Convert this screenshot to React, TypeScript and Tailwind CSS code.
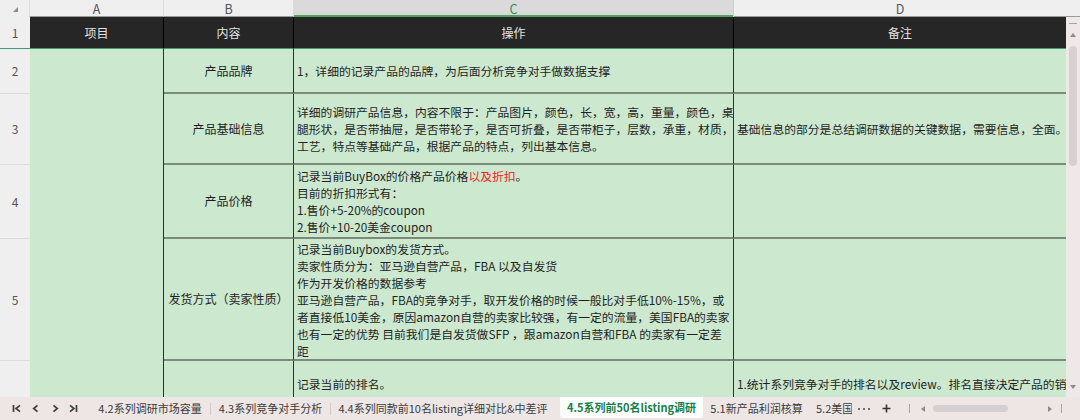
import React from "react";

const Line = ({ children }: { children: React.ReactNode }) => (
  <div className="whitespace-nowrap leading-[17px]">{children}</div>
);

const RowHead = ({ n, last }: { n?: string; last?: boolean }) => (
  <div
    className={
      "flex items-center justify-center bg-[#efefef] text-[12px] text-[#555] " +
      (last ? "" : "border-b border-[#dcdcdc]")
    }
  >
    {n}
  </div>
);

const BCell = ({ children, last }: { children?: React.ReactNode; last?: boolean }) => (
  <div
    className={
      "flex items-center justify-center bg-[#cce8cf] border-r border-[#2f2f2f] text-[12px] whitespace-nowrap " +
      (last ? "" : "border-b-2 border-b-[#7a8a7b]")
    }
  >
    {children}
  </div>
);

const CCell = ({ children, last, top }: { children?: React.ReactNode; last?: boolean; top?: boolean }) => (
  <div
    className={
      "flex flex-col overflow-hidden bg-[#cce8cf] border-r border-[#2f2f2f] pl-[3px] text-[11.8px] " +
      (top ? "justify-start pt-[14px] " : "justify-center ") +
      (last ? "" : "border-b-2 border-b-[#7a8a7b]")
    }
  >
    {children}
  </div>
);

const DCell = ({ children, last, top }: { children?: React.ReactNode; last?: boolean; top?: boolean }) => (
  <div
    className={
      "flex flex-col overflow-hidden bg-[#cce8cf] pl-[3px] text-[11.8px] " +
      (top ? "justify-start pt-[14px] " : "justify-center ") +
      (last ? "" : "border-b-2 border-b-[#7a8a7b]")
    }
  >
    {children}
  </div>
);

export default function App() {
  return (
    <div className="w-[1080px] h-[420px] overflow-hidden bg-white flex flex-col font-['Noto_Sans_CJK_SC','Noto_Sans',sans-serif] text-[#1f1f1f]">
      {/* column header */}
      <div className="flex h-[17px] bg-[#efefef] text-[12.5px] text-[#555]">
        <div className="w-[30px] border-r border-[#dcdcdc] flex items-start pl-[13px] pt-[7px]">
          <svg width="5" height="5" viewBox="0 0 5 5">
            <path d="M5 0 L5 5 L0 5 Z" fill="#8a8a8a" />
          </svg>
        </div>
        <div className="w-[134px] border-r border-[#dcdcdc] border-b border-b-[#9a9a9a] flex items-center justify-center">
          <span className="leading-[15px]">A</span>
        </div>
        <div className="w-[130px] border-r border-[#dcdcdc] border-b border-b-[#9a9a9a] flex items-center justify-center">
          <span className="leading-[15px]">B</span>
        </div>
        <div className="w-[440px] bg-[#dadada] border-r border-[#cfcfcf] shadow-[inset_0_-2px_0_#4fa35b] flex items-center justify-center text-[#1f8f55]">
          <span className="leading-[15px]">C</span>
        </div>
        <div className="w-[332px] border-b border-b-[#9a9a9a] flex items-center justify-center">
          <span className="leading-[15px]">D</span>
        </div>
        <div className="flex-1 border-b border-b-[#9a9a9a]" />
      </div>

      {/* sheet body */}
      <div className="flex h-[380px]">
        <div className="grid w-[1066px] h-[380px] overflow-hidden grid-cols-[30px_134px_130px_440px_332px] grid-rows-[32px_45px_71px_74px_122px_1fr]">
          {/* row 1 */}
          <div className="flex items-center justify-center bg-[#efefef] text-[12px] text-[#555] border-b border-[#3f9a78]">1</div>
          <div className="flex items-center justify-center bg-[#262626] text-[#e4e4e4] text-[12px] border-r border-black border-b border-b-[#3f9a78]">项目</div>
          <div className="flex items-center justify-center bg-[#262626] text-[#e4e4e4] text-[12px] border-r border-black border-b border-b-[#3f9a78]">内容</div>
          <div className="flex items-center justify-center bg-[#262626] text-[#e4e4e4] text-[12px] border-r border-black border-b border-b-[#3f9a78]">操作</div>
          <div className="flex items-center justify-center bg-[#262626] text-[#e4e4e4] text-[12px] border-b border-b-[#3f9a78]">备注</div>

          {/* column A merged */}
          <div className="col-start-2 row-start-2 row-span-5 bg-[#cce8cf] border-r border-[#2f2f2f]" />

          {/* row 2 */}
          <div className="col-start-1 row-start-2 grid">
            <RowHead n="2" />
          </div>
          <div className="col-start-3 row-start-2 grid">
            <BCell>产品品牌</BCell>
          </div>
          <div className="col-start-4 row-start-2 grid">
            <CCell>
              <Line>1，详细的记录产品的品牌，为后面分析竞争对手做数据支撑</Line>
            </CCell>
          </div>
          <div className="col-start-5 row-start-2 grid">
            <DCell />
          </div>

          {/* row 3 */}
          <div className="col-start-1 row-start-3 grid">
            <RowHead n="3" />
          </div>
          <div className="col-start-3 row-start-3 grid">
            <BCell>产品基础信息</BCell>
          </div>
          <div className="col-start-4 row-start-3 grid">
            <CCell>
              <Line>详细的调研产品信息，内容不限于：产品图片，颜色，长，宽，高，重量，颜色，桌</Line>
              <Line>腿形状，是否带抽屉，是否带轮子，是否可折叠，是否带柜子，层数，承重，材质，</Line>
              <Line>工艺，特点等基础产品，根据产品的特点，列出基本信息。</Line>
            </CCell>
          </div>
          <div className="col-start-5 row-start-3 grid">
            <DCell>
              <Line>基础信息的部分是总结调研数据的关键数据，需要信息，全面。</Line>
            </DCell>
          </div>

          {/* row 4 */}
          <div className="col-start-1 row-start-4 grid">
            <RowHead n="4" />
          </div>
          <div className="col-start-3 row-start-4 grid">
            <BCell>产品价格</BCell>
          </div>
          <div className="col-start-4 row-start-4 grid">
            <CCell>
              <Line>
                记录当前BuyBox的价格产品价格<span className="text-[#f02020]">以及折扣</span>。
              </Line>
              <Line>目前的折扣形式有：</Line>
              <Line>1.售价+5-20%的coupon</Line>
              <Line>2.售价+10-20美金coupon</Line>
            </CCell>
          </div>
          <div className="col-start-5 row-start-4 grid">
            <DCell />
          </div>

          {/* row 5 */}
          <div className="col-start-1 row-start-5 grid">
            <RowHead n="5" />
          </div>
          <div className="col-start-3 row-start-5 grid">
            <BCell>发货方式（卖家性质）</BCell>
          </div>
          <div className="col-start-4 row-start-5 grid">
            <CCell>
              <Line>记录当前Buybox的发货方式。</Line>
              <Line>卖家性质分为：亚马逊自营产品，FBA 以及自发货</Line>
              <Line>作为开发价格的数据参考</Line>
              <Line>亚马逊自营产品，FBA的竞争对手，取开发价格的时候一般比对手低10%-15%，或</Line>
              <Line>者直接低10美金，原因amazon自营的卖家比较强，有一定的流量，美国FBA的卖家</Line>
              <Line>也有一定的优势 目前我们是自发货做SFP ，跟amazon自营和FBA 的卖家有一定差</Line>
              <Line>距</Line>
            </CCell>
          </div>
          <div className="col-start-5 row-start-5 grid">
            <DCell />
          </div>

          {/* row 6 */}
          <div className="col-start-1 row-start-6 grid">
            <RowHead last />
          </div>
          <div className="col-start-3 row-start-6 grid">
            <BCell last />
          </div>
          <div className="col-start-4 row-start-6 grid">
            <CCell last top>
              <Line>记录当前的排名。</Line>
            </CCell>
          </div>
          <div className="col-start-5 row-start-6 grid">
            <DCell last top>
              <Line>1.统计系列竞争对手的排名以及review。排名直接决定产品的销量</Line>
            </DCell>
          </div>
        </div>

        {/* vertical scrollbar */}
        <div className="w-[14px] bg-[#eee8e8] flex flex-col items-center">
          <div className="mt-[6px] h-px w-[8px] bg-[#a8a2a2]" />
          <svg className="mt-[9px]" width="6" height="4" viewBox="0 0 6 4">
            <path d="M3 0 L6 4 L0 4 Z" fill="#8f8a8a" />
          </svg>
          <div className="mt-[9px] w-[8px] h-[120px] rounded-full bg-[#d6d0d0]" />
          <svg className="mt-auto mb-[8px]" width="6" height="4" viewBox="0 0 6 4">
            <path d="M0 0 L6 0 L3 4 Z" fill="#8f8a8a" />
          </svg>
        </div>
      </div>

      {/* sheet tabs */}
      <div className="flex h-[23px] bg-[#ede6e5] items-center text-[11px] text-[#3c3c3c] whitespace-nowrap">
        <div className="w-[90px] flex items-center">
          <svg className="ml-[12px]" width="9" height="9" viewBox="0 0 9 9">
            <path d="M1.5 1v7M8 1.3L4 4.5 8 7.7" stroke="#3f3f3f" strokeWidth="1.7" fill="none" />
          </svg>
          <svg className="ml-[11px]" width="7" height="9" viewBox="0 0 7 9">
            <path d="M5.5 1.3L1.7 4.5 5.5 7.7" stroke="#3f3f3f" strokeWidth="1.7" fill="none" />
          </svg>
          <svg className="ml-[13px]" width="7" height="9" viewBox="0 0 7 9">
            <path d="M1.5 1.3L5.3 4.5 1.5 7.7" stroke="#3f3f3f" strokeWidth="1.7" fill="none" />
          </svg>
          <svg className="ml-[10px]" width="9" height="9" viewBox="0 0 9 9">
            <path d="M7.5 1v7M1 1.3L5 4.5 1 7.7" stroke="#3f3f3f" strokeWidth="1.7" fill="none" />
          </svg>
        </div>
        <div className="w-[120px] flex justify-center">4.2系列调研市场容量</div>
        <div className="w-px h-[12px] bg-[#d2caca]" />
        <div className="w-[119px] flex justify-center">4.3系列竞争对手分析</div>
        <div className="w-px h-[12px] bg-[#d2caca]" />
        <div className="w-[224px] flex justify-center">4.4系列同款前10名listing详细对比&amp;中差评</div>
        <div className="ml-[5px] w-[143px] h-[21px] self-start bg-white rounded-b-[4px] flex items-center justify-center font-bold text-[#17804c]">
          4.5系列前50名listing调研
        </div>
        <div className="w-[107px] flex justify-center">5.1新产品利润核算</div>
        <div className="w-[42px] overflow-hidden pl-[6px]">5.2美国</div>
        <div className="w-[24px] flex justify-center items-center gap-[3px]">
          <span className="w-[2px] h-[2px] rounded-full bg-[#444]" />
          <span className="w-[2px] h-[2px] rounded-full bg-[#444]" />
          <span className="w-[2px] h-[2px] rounded-full bg-[#444]" />
        </div>
        <div className="w-[20px] flex justify-center">
          <svg width="9" height="9" viewBox="0 0 9 9">
            <path d="M4.5 0.5v8M0.5 4.5h8" stroke="#333" strokeWidth="1.6" />
          </svg>
        </div>
        <div className="ml-[13px] w-px h-[9px] bg-[#a9a2a2]" />
        <svg className="ml-[11px]" width="4" height="6" viewBox="0 0 4 6">
          <path d="M4 0 L4 6 L0 3 Z" fill="#8f8a8a" />
        </svg>
        <div className="ml-[8px] w-[75px] h-[7px] rounded-full bg-[#d6cfcf]" />
        <svg className="ml-[40px]" width="4" height="6" viewBox="0 0 4 6">
          <path d="M0 0 L0 6 L4 3 Z" fill="#8f8a8a" />
        </svg>
        <div className="ml-[9px] w-px h-[9px] bg-[#a9a2a2]" />
      </div>
    </div>
  );
}
